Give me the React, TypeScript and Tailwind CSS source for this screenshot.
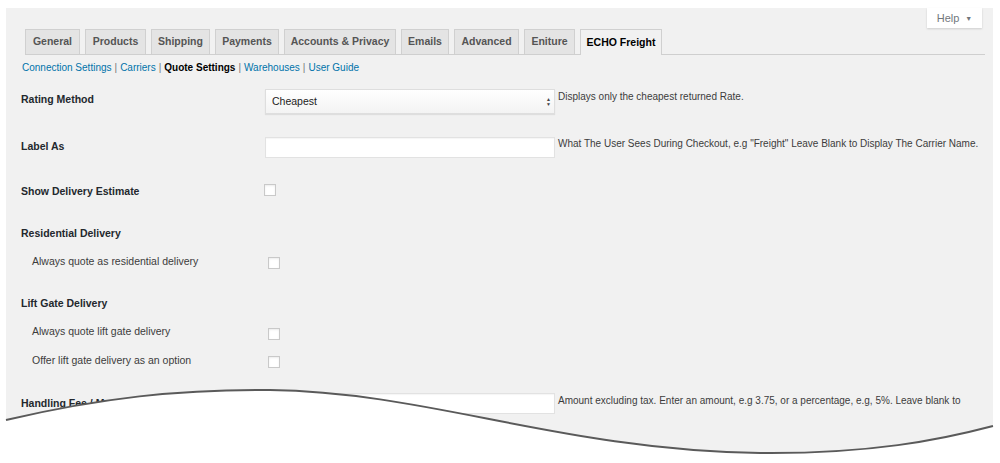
import { ReactNode } from 'react'

const tabs = [
  { name: 'General', w: 'w-[55px]' },
  { name: 'Products', w: 'w-[61px]' },
  { name: 'Shipping', w: 'w-[59px]' },
  { name: 'Payments', w: 'w-[64px]' },
  { name: 'Accounts & Privacy', w: 'w-[112px]' },
  { name: 'Emails', w: 'w-[48px]' },
  { name: 'Advanced', w: 'w-[65px]' },
  { name: 'Eniture', w: 'w-[51px]' },
]

function Checkbox({ className = '' }: { className?: string }) {
  return (
    <div
      className={`w-[12px] h-[12px] bg-white border border-[#c9c9c9] shadow-[inset_0_1px_2px_rgba(0,0,0,0.08)] ${className}`}
    />
  )
}

function Label({ children, sub = false }: { children: ReactNode; sub?: boolean }) {
  return sub ? (
    <div className="w-[244px] pl-[11px] text-[10.5px] leading-[14px] text-[#3c3c3c]">{children}</div>
  ) : (
    <div className="w-[244px] text-[10.5px] leading-[14px] font-bold text-[#23282d]">{children}</div>
  )
}

function TextInput() {
  return (
    <div className="w-[290px] h-[21px] bg-white border border-[#e2e2e2] shadow-[inset_0_1px_1px_rgba(0,0,0,0.04)]" />
  )
}

function Desc({ children, className = '' }: { children: ReactNode; className?: string }) {
  return (
    <div className={`ml-[3px] whitespace-nowrap text-[10px] leading-[14px] text-[#3c3c3c] ${className}`}>
      {children}
    </div>
  )
}

export default function App() {
  return (
    <div className="relative w-[1000px] h-[463px] bg-white overflow-hidden font-['Liberation_Sans',Arial,sans-serif]">
      <div className="ml-[6px] mt-[8px] w-[987px] h-[455px] bg-[#f1f1f1]">
        {/* Help */}
        <div className="flex justify-end pr-[11px]">
          <div className="w-[55px] h-[20px] bg-white shadow-[0_1px_2px_rgba(0,0,0,0.15)] flex items-center justify-center gap-[6px] text-[11px] text-[#72777c]">
            Help <span className="text-[7px] leading-none">▼</span>
          </div>
        </div>

        {/* Tabs */}
        <div className="mt-[1px] ml-[19px] mr-[8px] h-[26px] flex items-end gap-[5px] border-b border-[#cfcfcf]">
          {tabs.map((t) => (
            <div
              key={t.name}
              className={`${t.w} h-[25px] flex items-center justify-center border border-b-0 border-[#d0d0d0] bg-[#e4e4e4] text-[10.5px] font-semibold text-[#555]`}
            >
              {t.name}
            </div>
          ))}
          <div className="w-[82px] h-[26px] -mb-px flex items-center justify-center border border-b-0 border-[#d0d0d0] bg-[#f1f1f1] text-[10.5px] font-bold text-black">
            ECHO Freight
          </div>
        </div>

        {/* Sub links */}
        <div className="mt-[6px] ml-[16px] h-[14px] flex gap-[3px] text-[10px] leading-[14px] text-[#0073aa]">
          <span>Connection Settings</span>
          <span className="text-[#777]">|</span>
          <span>Carriers</span>
          <span className="text-[#777]">|</span>
          <span className="font-bold text-black">Quote Settings</span>
          <span className="text-[#777]">|</span>
          <span>Warehouses</span>
          <span className="text-[#777]">|</span>
          <span>User Guide</span>
        </div>

        <div className="pl-[15px] mt-[14px]">
          {/* Rating Method */}
          <div className="flex items-start h-[48px]">
            <div className="pt-[3px]">
              <Label>Rating Method</Label>
            </div>
            <div className="w-[290px] h-[25px] flex items-center justify-between pl-[6px] pr-[3px] bg-gradient-to-b from-white to-[#f3f3f3] border border-[#dedede] shadow-[0_1px_1px_rgba(0,0,0,0.08)] text-[10.5px] text-[#222]">
              <span>Cheapest</span>
              <span className="flex flex-col items-center text-[5px] leading-[5px] text-[#444]">
                <span>▲</span>
                <span>▼</span>
              </span>
            </div>
            <Desc className="pt-[1px]">Displays only the cheapest returned Rate.</Desc>
          </div>

          {/* Label As */}
          <div className="flex items-start h-[47px]">
            <div className="pt-[2px]">
              <Label>Label As</Label>
            </div>
            <TextInput />
            <Desc>What The User Sees During Checkout, e.g "Freight" Leave Blank to Display The Carrier Name.</Desc>
          </div>

          {/* Show Delivery Estimate */}
          <div className="flex items-start h-[42px]">
            <Label>Show Delivery Estimate</Label>
            <Checkbox className="-ml-[1px]" />
          </div>

          {/* Residential */}
          <div className="h-[28px]">
            <Label>Residential Delivery</Label>
          </div>
          <div className="flex items-start h-[42px]">
            <Label sub>Always quote as residential delivery</Label>
            <Checkbox className="ml-[3px] mt-[3px]" />
          </div>

          {/* Lift gate */}
          <div className="h-[28px]">
            <Label>Lift Gate Delivery</Label>
          </div>
          <div className="flex items-start h-[29px]">
            <Label sub>Always quote lift gate delivery</Label>
            <Checkbox className="ml-[3px] mt-[4px]" />
          </div>
          <div className="flex items-start h-[40px]">
            <Label sub>Offer lift gate delivery as an option</Label>
            <Checkbox className="ml-[3px] mt-[3px]" />
          </div>

          {/* Handling fee */}
          <div className="flex items-start h-[40px]">
            <div className="pt-[3px]">
              <Label>Handling Fee / Markup</Label>
            </div>
            <TextInput />
            <Desc className="pt-[1px]">
              Amount excluding tax. Enter an amount, e.g 3.75, or a percentage, e.g, 5%. Leave blank to
            </Desc>
          </div>
        </div>
      </div>

      {/* torn edge */}
      <svg className="absolute inset-0" width="1000" height="463" viewBox="0 0 1000 463">
        <path
          d="M0 422 L6 420 C 100 398, 180 389, 270 390 C 430 392, 560 450, 760 453 C 870 454, 940 440, 993 426 L1000 424 L1000 463 L0 463 Z"
          fill="#fff"
        />
        <path
          d="M6 420 C 100 398, 180 389, 270 390 C 430 392, 560 450, 760 453 C 870 454, 940 440, 993 426"
          fill="none"
          stroke="#5a5a5a"
          strokeWidth="2"
        />
      </svg>
    </div>
  )
}
